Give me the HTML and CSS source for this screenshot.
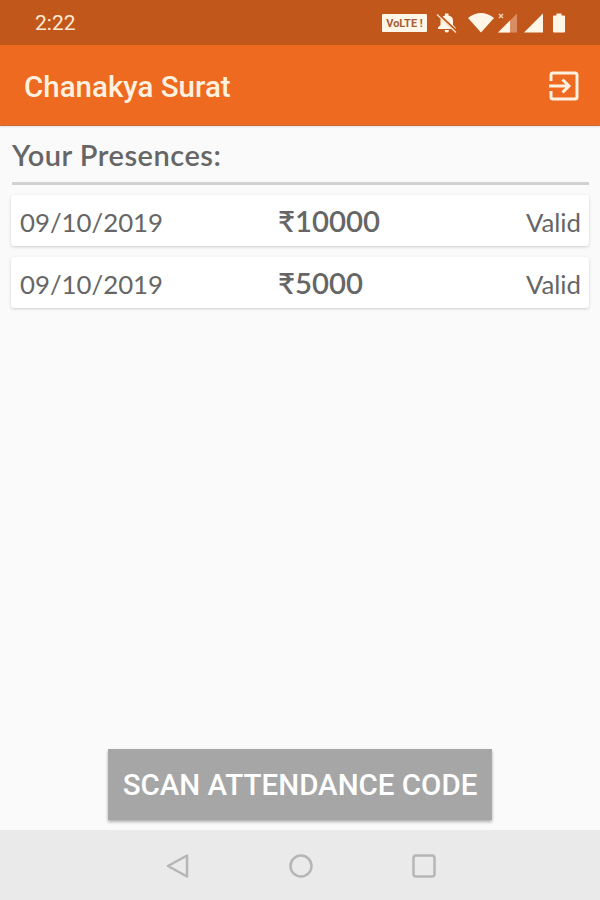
FILE: index.html
```html
<!DOCTYPE html>
<html lang="en">
<head>
    <meta charset="UTF-8">
    <meta name="viewport" content="width=device-width, initial-scale=1.0">
    <title>Chanakya Surat</title>
    <link rel="stylesheet" href="styles.css">
</head>
<body>
    <div class="status-bar">
        <span class="clock">2:22</span>
        <div class="status-icons">
            <span class="volte">VoLTE !</span>
            <svg class="bell" width="22" height="20" viewBox="0 0 22 20">
                <path d="M2 16V14.500L4.500 12V7.500Q4.500 3.500 9 2.500V.5H12.500V2.500Q17 3.500 17 7.500V12L19.500 14.500V16ZM8.500 17H13Q13 19.500 10.750 19.500T8.500 17Z" fill="#fff6e8"/>
                <path d="M2 .5L21 18.500" stroke="#c1571b" stroke-width="2"/>
                <path d="M1 1.500L20 19.500" stroke="#fbe0c8" stroke-width="1.400"/>
            </svg>
            <svg class="wifi" width="26" height="20" viewBox="0 0 26 20">
                <path d="M0 5Q13 -5 26 5L13 19.500Z" fill="#fff6e8"/>
            </svg>
            <svg class="signal-off" width="20" height="20" viewBox="0 0 20 20">
                <path d="M0 19.500L19 .5V19.500Z" fill="#d98d62"/>
                <path d="M0 19.500L12 7.500V19.500Z" fill="#fff6e8"/>
                <path d="M1 1L5 5M5 1L1 5" stroke="#f3cdb0" stroke-width="1.500"/>
            </svg>
            <svg class="signal" width="20" height="20" viewBox="0 0 20 20">
                <path d="M0 19.500L19 .5V19.500Z" fill="#fff6e8"/>
            </svg>
            <svg class="battery" width="12" height="20" viewBox="0 0 12 20">
                <path d="M1 2.500H3.500V.5H8.500V2.500H11Q12 2.500 12 3.500V18.500Q12 19.500 11 19.500H1Q0 19.500 0 18.500V3.500Q0 2.500 1 2.500Z" fill="#fff6e8"/>
            </svg>
        </div>
    </div>

    <div class="app-bar">
        <h1>Chanakya Surat</h1>
        <svg width="30" height="30" viewBox="0 0 30 30" fill="none" stroke="#fff1df" stroke-width="3">
            <path d="M2 10V4Q2 2 4 2H26Q28 2 28 4V26Q28 28 26 28H4Q2 28 2 26V20"/>
            <path d="M0 15H20M13.500 8.500L20 15L13.500 21.500"/>
        </svg>
    </div>

    <div class="content">
        <h2>Your Presences:</h2>
        <div class="presence">
            <span class="date">09/10/2019</span>
            <span class="amount">₹10000</span>
            <span class="state">Valid</span>
        </div>
        <div class="presence">
            <span class="date">09/10/2019</span>
            <span class="amount">₹5000</span>
            <span class="state">Valid</span>
        </div>
        <button class="scan-btn">SCAN ATTENDANCE CODE</button>
    </div>

    <div class="nav-bar">
        <svg width="24" height="26" viewBox="0 0 24 26">
            <path d="M2 13L21 2.500V23.500Z"/>
        </svg>
        <svg width="26" height="26" viewBox="0 0 26 26">
            <circle cx="13" cy="13" r="10.500"/>
        </svg>
        <svg width="26" height="26" viewBox="0 0 26 26">
            <rect x="2.500" y="2.500" width="21" height="21" rx="2.500"/>
        </svg>
    </div>
</body>
</html>
```
FILE: styles.css
```css
* {
    box-sizing: border-box;
}
body {
    margin: 0;
    height: 900px;
    display: flex;
    flex-direction: column;
    background-color: #fafafa;
    font-family: Lato, "Noto Sans", sans-serif;
    color: #666;
    overflow: hidden;
}
.status-bar {
    height: 45px;
    padding: 0 35px;
    display: flex;
    justify-content: space-between;
    align-items: center;
    background-color: #c1571b;
}
.clock {
    padding-top: 1px;
    font: 21px Roboto, sans-serif;
    color: #ffe9d2;
}
.status-icons {
    display: flex;
    align-items: center;
}
.volte {
    width: 45px;
    height: 18px;
    border-radius: 1px;
    background-color: #fff6e8;
    color: #a5603a;
    font: bold 11px/19px Roboto, sans-serif;
    text-align: center;
    white-space: nowrap;
}
.bell {
    margin-left: 9px;
}
.wifi {
    margin-left: 10px;
}
.signal-off {
    margin-left: 4px;
}
.signal {
    margin-left: 6px;
}
.battery {
    margin-left: 9px;
}
.app-bar {
    height: 81px;
    padding: 0 21px 0 24px;
    display: flex;
    justify-content: space-between;
    align-items: center;
    background-color: #ed6a20;
    border-bottom: 1px solid #cf6a35;
    box-shadow: 0 1px 2px rgba(0, 0, 0, 0.1);
}
.app-bar h1 {
    margin: 4px 0 0;
    font: 500 29.5px Roboto, sans-serif;
    color: #fff1df;
}
.app-bar svg {
    margin-top: 1px;
}
.content {
    flex: 1;
    padding: 0 11px 10px;
    display: flex;
    flex-direction: column;
}
.content h2 {
    margin: 0 0 10px 1px;
    height: 59px;
    border-bottom: 3px solid #d2d2d2;
    font-size: 29px;
    font-weight: 600;
    line-height: 57px;
    letter-spacing: 0.5px;
}
.presence {
    height: 51px;
    margin-bottom: 11px;
    padding: 0 8px 0 9px;
    display: grid;
    grid-template-columns: 258px 1fr auto;
    align-items: center;
    background-color: #fff;
    border-radius: 3px;
    box-shadow: 0 1px 3px rgba(0, 0, 0, 0.18);
    font-size: 25.8px;
}
.date,
.state {
    padding-top: 2px;
}
.amount {
    font-size: 29.3px;
    font-weight: 600;
}
.scan-btn {
    width: 384px;
    height: 71px;
    margin: auto auto 0;
    padding: 0;
    border: none;
    background-color: #a6a6a6;
    color: #fff;
    font: 500 29.5px Roboto, sans-serif;
    white-space: nowrap;
    box-shadow: 0 2px 3px rgba(0, 0, 0, 0.3);
}
.nav-bar {
    height: 70px;
    padding: 2px 163px 0 166px;
    display: flex;
    justify-content: space-between;
    align-items: center;
    background-color: #eaeaea;
}
.nav-bar svg {
    fill: none;
    stroke: #b6b6b6;
    stroke-width: 2.5;
    stroke-linejoin: round;
}
```
